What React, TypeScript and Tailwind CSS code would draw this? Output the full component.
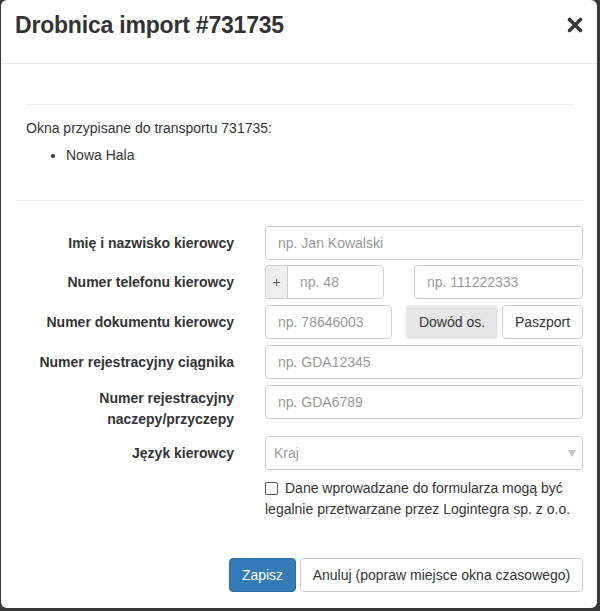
import React from "react";

const inputCls =
  "h-[34px] rounded-[4px] border border-[#cccccc] bg-white px-[12px] text-[14px] text-[#555] placeholder:text-[#999] outline-none";

function Label({ children, two }: { children: React.ReactNode; two?: boolean }) {
  return (
    <div
      className={
        "w-[233px] shrink-0 text-right font-bold text-[14px] text-[#333] " +
        (two ? "pt-[3px] leading-[21px]" : "pt-[7px] leading-[20px]")
      }
    >
      {children}
    </div>
  );
}

export default function App() {
  return (
    <div
      className="w-[600px] h-[611px] bg-[#3a3a3a] overflow-hidden"
      style={{ fontFamily: '"Liberation Sans", Arial, sans-serif' }}
    >
      <div className="ml-[1px] w-[596px] h-[608px] bg-white rounded-[6px] text-[#333] text-[14px]">
        {/* header */}
        <div className="h-[64px] border-b border-[#e5e5e5] flex items-start justify-between pl-[14px] pr-[14px] pt-[13px]">
          <h4 className="text-[23px] leading-[24px] font-bold tracking-[-0.2px] text-[#333]">
            Drobnica import #731735
          </h4>
          <svg width="16" height="16" viewBox="0 0 16 16" className="mt-[4px]">
            <path
              d="M2.5 2.5 L13.5 13.5 M13.5 2.5 L2.5 13.5"
              stroke="#3a3a3a"
              strokeWidth="3.6"
              strokeLinecap="round"
            />
          </svg>
        </div>

        {/* body */}
        <div className="pt-[40px]">
          <div className="ml-[25px] w-[548px] border-t border-[#eeeeee]" />
          <div className="ml-[25px] mt-[13px] leading-[20px]">Okna przypisane do transportu 731735:</div>
          <ul className="ml-[25px] mt-[7px] list-disc pl-[40px] leading-[20px]">
            <li>Nowa Hala</li>
          </ul>
          <div className="ml-[15px] mt-[35px] w-[568px] border-t border-[#eeeeee]" />

          <div className="mt-[25px] flex flex-col">
            <div className="flex gap-[31px] mb-[5px]">
              <Label>Imię i nazwisko kierowcy</Label>
              <input className={inputCls + " w-[318px]"} placeholder="np. Jan Kowalski" />
            </div>

            <div className="flex gap-[31px] mb-[6px]">
              <Label>Numer telefonu kierowcy</Label>
              <div className="flex w-[318px]">
                <div className="w-[22px] h-[34px] border border-r-0 border-[#cccccc] bg-[#eeeeee] rounded-l-[4px] flex items-center justify-center text-[14px] text-[#555]">
                  +
                </div>
                <input
                  className={inputCls + " w-[97px] rounded-l-none"}
                  placeholder="np. 48"
                />
                <div className="w-[30px]" />
                <input className={inputCls + " w-[169px]"} placeholder="np. 111222333" />
              </div>
            </div>

            <div className="flex gap-[31px] mb-[6px]">
              <Label>Numer dokumentu kierowcy</Label>
              <div className="flex w-[318px]">
                <input className={inputCls + " w-[127px]"} placeholder="np. 78646003" />
                <div className="w-[14px]" />
                <button className="w-[92px] h-[34px] rounded-[4px] bg-[#e6e6e6] border border-[#e6e6e6] text-[14px] text-[#333]">
                  Dowód os.
                </button>
                <div className="w-[4px]" />
                <button className="w-[81px] h-[34px] rounded-[4px] bg-white border border-[#cccccc] text-[14px] text-[#333]">
                  Paszport
                </button>
              </div>
            </div>

            <div className="flex gap-[31px] mb-[6px]">
              <Label>Numer rejestracyjny ciągnika</Label>
              <input className={inputCls + " w-[318px]"} placeholder="np. GDA12345" />
            </div>

            <div className="flex gap-[31px] mb-[6px] h-[45px]">
              <Label two>
                Numer rejestracyjny
                <br />
                naczepy/przyczepy
              </Label>
              <input className={inputCls + " w-[318px]"} placeholder="np. GDA6789" />
            </div>

            <div className="flex gap-[31px]">
              <Label>Język kierowcy</Label>
              <div className="w-[318px] h-[34px] rounded-[4px] border border-[#cccccc] bg-white flex items-center justify-between pl-[8px] pr-[6px]">
                <span className="text-[14px] text-[#999]">Kraj</span>
                <svg width="8" height="7" viewBox="0 0 8 7">
                  <path d="M0 0 L8 0 L4 7 Z" fill="#c4c4c4" />
                </svg>
              </div>
            </div>

            <div className="flex mt-[8px]">
              <div className="w-[264px] shrink-0" />
              <label className="block w-[318px] leading-[21px] text-[14px] text-[#333]">
                <span className="inline-block w-[13px] h-[13px] border border-[#555] rounded-[2px] bg-white align-[-2px] mr-[7px]" />
                Dane wprowadzane do formularza mogą być legalnie przetwarzane przez Logintegra sp. z o.o.
              </label>
            </div>

            <div className="flex justify-end gap-[4px] mt-[38px] pr-[14px]">
              <button className="w-[67px] h-[34px] rounded-[4px] bg-[#337ab7] border border-[#2e6da4] text-white text-[14px]">
                Zapisz
              </button>
              <button className="w-[283px] h-[34px] rounded-[4px] bg-white border border-[#cccccc] text-[#333] text-[14px]">
                Anuluj (popraw miejsce okna czasowego)
              </button>
            </div>
          </div>
        </div>
      </div>
    </div>
  );
}
